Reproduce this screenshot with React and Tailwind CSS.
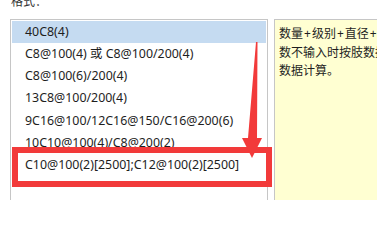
const items = [
  "40C8(4)",
  "C8@100(4) 或 C8@100/200(4)",
  "C8@100(6)/200(4)",
  "13C8@100/200(4)",
  "9C16@100/12C16@150/C16@200(6)",
  "10C10@100(4)/C8@200(2)",
  "C10@100(2)[2500];C12@100(2)[2500]",
];

const Plus = () => <span className="mx-[1px] font-['Noto_Sans',sans-serif]">+</span>;

const App = () => {
  return (
    <div className="relative flex flex-col w-[377px] h-[200px] overflow-hidden bg-white text-[12px] text-[#1e1e1e] font-['Noto_Sans','Noto_Sans_CJK_SC',sans-serif]">
      <div className="h-[19px] shrink-0 flex flex-col pl-[11px]">
        <div className="-mt-[4px] leading-[12px] text-[#333]">格式：</div>
      </div>
      <div className="flex items-start">
        <div className="ml-[10px] w-[258px] h-[200px] shrink-0 border border-b-0 border-[#c6c6c6] p-px">
          {items.map((t, i) => (
            <div
              key={i}
              className={`h-[22.2px] flex items-center pl-[13px] text-[12.4px] whitespace-nowrap overflow-hidden ${i === 0 ? "bg-[#c5dbf1]" : ""}`}
            >
              {t}
            </div>
          ))}
        </div>
        <div className="ml-[6px] flex-1 h-[200px] border border-r-0 border-b-0 border-[#c6c6c6] bg-[#ffffd2] pl-[4px] pt-[4px] leading-[18px] whitespace-nowrap overflow-hidden font-['Noto_Sans_CJK_SC',sans-serif]">
          <div>数量<Plus />级别<Plus />直径<Plus />间距(肢数)</div>
          <div>数不输入时按肢数据</div>
          <div>数据计算。</div>
        </div>
      </div>

      {/* red highlight box */}
      <div className="absolute left-[12px] top-[147px] w-[260px] h-[40px] border-[6px] border-[#f23a3a]" />

      {/* arrow */}
      <svg className="absolute left-0 top-0" width="377" height="200" viewBox="0 0 377 200">
        <polygon points="256,42 257.5,42 257,138 262,138 252,158 242,138 248,138" fill="#f23a3a" />
      </svg>
    </div>
  );
};

export default App;
